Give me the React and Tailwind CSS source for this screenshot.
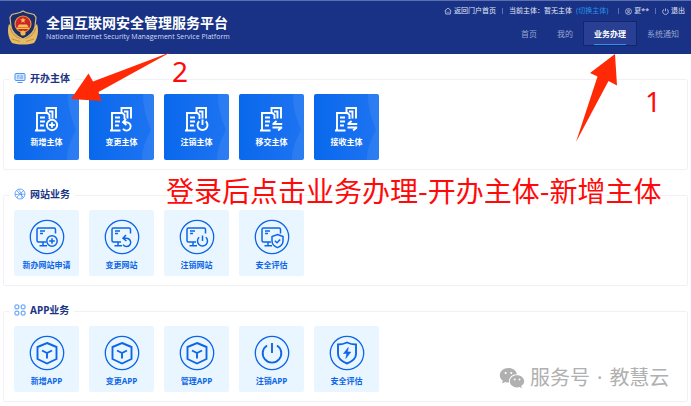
import React from "react";

const cjk = "font-['Noto_Sans','Noto_Sans_CJK_SC',sans-serif]";

function Badge({ kind }) {
  switch (kind) {
    case "plus":
      return (
        <g>
          <circle cx="18" cy="19" r="5.2" />
          <path d="M18 16.2v5.6M15.2 19h5.600" />
        </g>
      );
    case "undo":
      return <path d="M14 16.200h3.500a4.200 4.200 0 1 1-3.500 6.500M17 13l-3 3.200 3.400 2.800" />;
    case "power":
      return <path d="M18.500 13.500v5.500M15.200 15.300a5 5 0 1 0 6.600 0" />;
    case "swap":
      return <path d="M13.500 18h9.700M14 18l3.600-3M23.200 21.500h-9.700M22.700 21.500l-3.600 3" />;
    case "shield":
      return (
        <g>
          <path d="M18.500 12.500l5.500 2v4.500c0 3.300-2.200 5.400-5.500 6.600-3.300-1.200-5.500-3.300-5.500-6.600v-4.500z" />
          <path d="M15.800 18.800l2.200 2 3.200-3.400" />
        </g>
      );
    default:
      return null;
  }
}

function BuildingIcon({ kind }) {
  return (
    <svg viewBox="0 0 26 26" className="h-[26px] w-[26px]" fill="none" stroke="currentColor" strokeWidth="1.9" aria-hidden="true">
      <path d="M1 24.500h10.500M3 24.500V7h10.500l2 2v4M12.500 7V2h9.500v10.500M15 5.500h3.500v7" />
      <path d="M6 11.500h5M6 15.500h5M6 19.500h4" />
      <Badge kind={kind} />
    </svg>
  );
}

function MonitorIcon({ kind }) {
  return (
    <svg viewBox="0 0 36 36" className="h-9 w-9" fill="none" stroke="currentColor" strokeWidth="1.5" aria-hidden="true">
      <circle cx="18" cy="18" r="16.700" strokeWidth="1.300" />
      <path d="M26.500 14.500V10.500q0-1.500-1.500-1.500H9.500Q8 9 8 10.500v11Q8 23 9.500 23H17M14 23v3.500M10.500 26.700H18M11 12h5M11 14.500h3" />
      <g transform="translate(5 3)">
        <Badge kind={kind} />
      </g>
    </svg>
  );
}

function AppIcon({ kind }) {
  return (
    <svg viewBox="0 0 36 36" className="h-9 w-9" fill="none" stroke="currentColor" strokeWidth="1.9" aria-hidden="true">
      <circle cx="18" cy="18" r="16.700" strokeWidth="1.300" />
      {kind === "cube" && <path d="M18 8l9.500 4v12L18 28.500 8.500 24V12zM13 15.500l5 2.500 5-2.500M18 18v5.500" />}
      {kind === "power" && <path d="M18 8v10M13 10.500a9.300 9.300 0 1 0 10 0" />}
      {kind === "bolt" && (
        <g>
          <path d="M18 7.500c3 1.500 6 2 9 2v9.500c0 4.500-4 7.500-9 9.500-5-2-9-5-9-9.500V9.500c3 0 6-.5 9-2z" />
          <path d="M19.300 12.500l-4.800 6h3.300l-1 5 5-6.500h-3.300z" fill="currentColor" strokeWidth=".6" />
        </g>
      )}
    </svg>
  );
}

function Emblem() {
  return (
    <svg viewBox="0 0 32 36" className="h-9 w-8 shrink-0" aria-hidden="true">
      <path d="M2 14C0 20 1 28 5 33c4 1.500 7 1.500 11 1.500s7 0 11-1.500c4-5 5-13 3-19l-4 4H6z" fill="#e6bb62" />
      <path d="M16 1l3 1.500L27 4.500l2 3-1 9C27 22 23 26 16 29 9 26 5 22 4 16.500L3 7.500l2-3 8-2z" fill="#1d2d66" stroke="#d9bd86" strokeWidth="1.200" />
      <circle cx="16" cy="14" r="8" fill="#d0222b" stroke="#d99a48" strokeWidth="1.200" />
      <path d="M16 7.500l.8 1.800 2 .2-1.500 1.300.4 2-1.700-1-1.700 1 .4-2-1.500-1.300 2-.2zM10.500 17l1.500-2.500h8l1.500 2.500zM10 17.500h12V19H10z" fill="#f4c64f" />
      <circle cx="16" cy="23" r="2.600" fill="#edbd4c" />
      <path d="M3.500 18c1 6 5 9 10 10.500M28.500 18c-1 6-5 9-10 10.500M5 29l8 2.500M27 29l-8 2.500" fill="none" stroke="#b98238" strokeWidth=".8" />
    </svg>
  );
}

function SectionIcon({ kind }) {
  return (
    <svg viewBox="0 0 12 12" className="h-3 w-3" fill="none" stroke="#4a94f5" strokeWidth="1" aria-hidden="true">
      {kind === "subject" && (
        <g>
          <rect x="1" y="1.500" width="10" height="7" rx="1" fill="#d3e6ff" />
          <path d="M3 4h2.500M6.500 4H9M3 6h1.500M5.500 6H9M3.500 10.500h5" />
        </g>
      )}
      {kind === "site" && (
        <g strokeWidth=".8">
          <circle cx="6" cy="6" r="5" />
          <path d="M2.500 2.500l7 7M1 6.500c3 .5 7-1 8.500-4M4 1.500c3 2 4 5 4 9M3 10c.5-3 4-4.500 8-3.500" />
        </g>
      )}
      {kind === "app" && (
        <g>
          <rect x="1" y="1" width="3.800" height="3.800" rx=".8" />
          <rect x="7.200" y="1" width="3.800" height="3.800" rx=".8" />
          <rect x="1" y="7.200" width="3.800" height="3.800" rx=".8" />
          <rect x="7.200" y="7.200" width="3.800" height="3.800" rx=".8" />
        </g>
      )}
    </svg>
  );
}

const sections = [
  { icon: "subject", title: "开办主体", items: [["新增主体", "plus"], ["变更主体", "undo"], ["注销主体", "power"], ["移交主体", "swap"], ["接收主体", "swap"]] },
  { icon: "site", title: "网站业务", items: [["新办网站申请", "plus"], ["变更网站", "undo"], ["注销网站", "power"], ["安全评估", "shield"]] },
  { icon: "app", title: "APP业务", items: [["新增APP", "cube"], ["变更APP", "cube"], ["管理APP", "cube"], ["注销APP", "power"], ["安全评估", "bolt"]] },
];

function Card({ section, label, kind }) {
  const solid = section === "subject";
  return (
    <button
      type="button"
      className={
        "relative flex h-[66px] w-[65px] flex-col items-center overflow-hidden rounded-[2px] text-[8px] leading-[12px] font-bold whitespace-nowrap " +
        (solid ? "bg-linear-to-r from-[#0868ec] to-[#1d74f2] pt-[12px] text-white" : "bg-[#eaf6ff] pt-[9px] text-[#0d66e6]")
      }
    >
      {solid && (
        <svg viewBox="0 0 65 66" className="absolute inset-0 h-full w-full" aria-hidden="true">
          <path d="M54 0c0 14 3 23 8 36-5 10-9 18-9 30h12V0z" fill="#fff" fillOpacity=".07" />
        </svg>
      )}
      {section === "subject" && <BuildingIcon kind={kind} />}
      {section === "site" && <MonitorIcon kind={kind} />}
      {section === "app" && <AppIcon kind={kind} />}
      <span className="mt-[4px]">{label}</span>
    </button>
  );
}

export default function App() {
  return (
    <div className={"relative min-h-screen overflow-hidden bg-white " + cjk}>
      <header className="flex h-[54px] justify-between border-t border-[#5b70ae] bg-[#193286] pl-[7px] text-white">
        <div className="flex items-center gap-[7px]">
          <Emblem />
          <div>
            <h1 className="text-[14px] leading-[18px] font-bold whitespace-nowrap">全国互联网安全管理服务平台</h1>
            <p className="font-['Open_Sans',sans-serif] text-[7px] leading-[10px] whitespace-nowrap text-[#d5dcf0]">National Internet Security Management Service Platform</p>
          </div>
        </div>
        <div className="flex flex-col items-end">
          <div className="flex h-[20px] items-center gap-[10px] pr-[6px] text-[7px] leading-[10px] whitespace-nowrap text-[#e4e9f6]">
            <a href="#home" className="flex items-center gap-[2px]">
              <svg viewBox="0 0 8 8" className="h-2 w-2" fill="none" stroke="currentColor" strokeWidth=".7" aria-hidden="true">
                <path d="M.6 4L4 1l3.400 3M1.700 3.500V7h4.600V3.500M3.300 5.300h1.400" />
              </svg>
              返回门户首页
            </a>
            <span className="-mx-[4px] h-[6px] w-px bg-[#5d70af]" />
            <span className="flex gap-[4px]">
              当前主体：暂无主体
              <a href="#switch" className="text-[#2b92e8]">(切换主体)</a>
            </span>
            <span className="h-[6px] w-px bg-[#5d70af]" />
            <span className="-mx-[4px] flex items-center gap-[2px]">
              <svg viewBox="0 0 8 8" className="h-[7px] w-[7px]" fill="none" stroke="currentColor" strokeWidth=".7" aria-hidden="true">
                <circle cx="4" cy="4" r="3.400" />
                <circle cx="4" cy="3.300" r="1.100" />
                <path d="M2 6.300c.5-1.500 3.500-1.500 4 0" />
              </svg>
              夏**
            </span>
            <span className="h-[6px] w-px bg-[#5d70af]" />
            <a href="#logout" className="-ml-[4px] flex items-center gap-[2px]">
              <svg viewBox="0 0 8 8" className="h-[7px] w-[7px]" fill="none" stroke="currentColor" strokeWidth=".8" aria-hidden="true">
                <path d="M4 .5v3.200M2.300 1.400a3.200 3.200 0 1 0 3.400 0" />
              </svg>
              退出
            </a>
          </div>
          <nav className="flex h-[25px] items-center gap-[20px] pr-[12px] text-[8px] leading-[12px] whitespace-nowrap text-[#98a5cf]">
            <a href="#index">首页</a>
            <a href="#mine">我的</a>
            <a href="#business" className="-mx-[10px] flex h-[25px] items-center border border-[#13256c] bg-[#283f94] px-[10px] font-bold text-white">
              <span className="border-b border-[#2496ec] pt-[5px] pb-[4px]">业务办理</span>
            </a>
            <a href="#notice">系统通知</a>
          </nav>
        </div>
      </header>

      <main className="flex flex-col gap-[15px] px-[3px] pt-[15px] pb-[3px]">
        {sections.map((s) => (
          <fieldset key={s.icon} className="rounded-[2px] border border-[#f0f1f5] px-[10px] pt-[5px] pb-[9px]">
            <legend className="-ml-[5px] flex h-[20px] items-center gap-[4px] bg-white px-[5px] pb-[2px] text-[10px] leading-[18px] font-bold text-[#1c3484]">
              <SectionIcon kind={s.icon} />
              {s.title}
            </legend>
            <div className="flex flex-wrap gap-[10px]">
              {s.items.map(([label, kind]) => (
                <Card key={label} section={s.icon} label={label} kind={kind} />
              ))}
            </div>
          </fieldset>
        ))}
      </main>

      <svg viewBox="0 0 691 406" className="pointer-events-none absolute top-0 left-0 h-[406px] w-[691px]" fill="#ff2a05" aria-hidden="true">
        <path d="M71 99L88.500 73.500 93 81.500 171 52 98.500 92 101.500 101z" />
        <path d="M615 54L590 73 597.500 76.500 576 142 608.500 81 617 85.500z" />
      </svg>
      <span className="absolute top-[51px] left-[172px] text-[28px] leading-[40px] text-[#ff0a0a]">2</span>
      <span className="absolute top-[81px] left-[645px] text-[28px] leading-[40px] text-[#ff0a0a]">1</span>
      <p className="absolute top-[170px] left-[166px] font-['Noto_Sans_CJK_SC',sans-serif] text-[28px] leading-[40px] whitespace-nowrap text-[#ff0a0a]">
        登录后点击业务办理-开办主体-新增主体
      </p>
      <div className="absolute top-[364px] left-[499px] flex items-center gap-[5px] text-[#b0b0b0]">
        <svg viewBox="0 0 26 22" className="h-[22px] w-[26px]" fill="currentColor" aria-hidden="true">
          <path d="M9.500 1C4.500 1 .8 4.200.8 8.300c0 2.300 1.200 4.200 3.100 5.500L3 16.500l3.200-1.600c1.200.4 2.500.6 3.800.5C9.300 11 13 7 18 7.200 17.200 3.500 13.800 1 9.500 1z" />
          <path d="M18 8.200c-4 0-7.200 2.700-7.200 6.100s3.200 6.100 7.200 6.100c.9 0 1.700-.1 2.500-.4l2.300 1.300-.6-2.200c1.800-1.100 3-2.800 3-4.800 0-3.400-3.200-6.100-7.200-6.100z" />
          <g fill="#fff">
            <circle cx="6.700" cy="6" r="1.100" />
            <circle cx="12.300" cy="6" r="1.100" />
            <circle cx="15.700" cy="12.500" r=".9" />
            <circle cx="20.500" cy="12.500" r=".9" />
          </g>
        </svg>
        <span className="flex gap-[7px] text-[20px] leading-[28px] whitespace-nowrap">
          <span>服务号</span>
          <span>·</span>
          <span>教慧云</span>
        </span>
      </div>
    </div>
  );
}
